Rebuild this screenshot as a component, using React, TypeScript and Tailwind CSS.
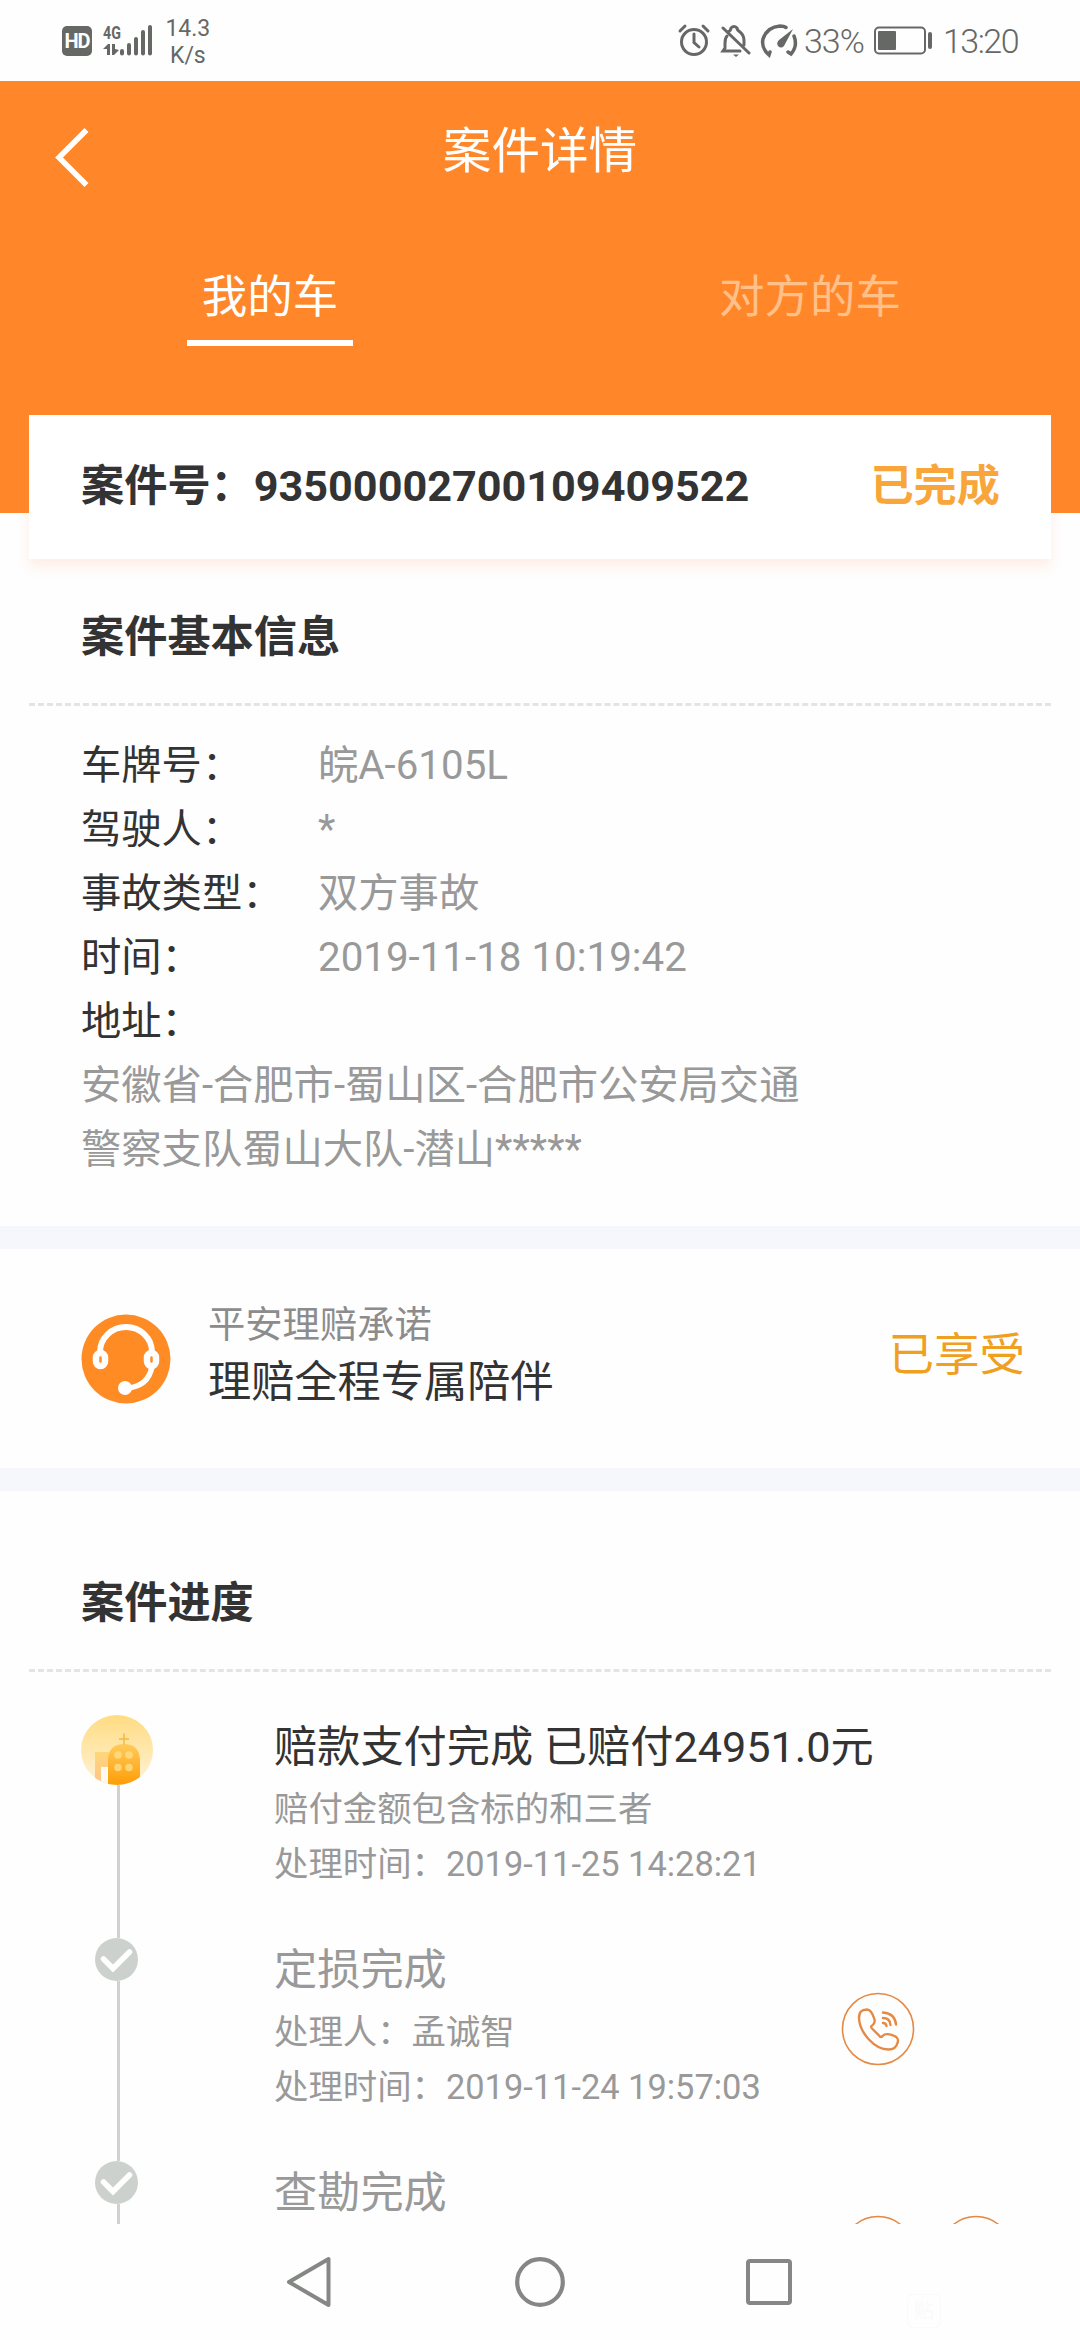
import type { ReactNode } from 'react'

const basicInfo = [
  { label: '车牌号：', value: '皖A-6105L' },
  { label: '驾驶人：', value: '*' },
  { label: '事故类型：', value: '双方事故' },
  { label: '时间：', value: '2019-11-18 10:19:42' },
  { label: '地址：', value: '' },
]

function StatusBar() {
  return (
    <div className="flex h-[81px] shrink-0 items-start justify-between pr-[61px] pl-[62px] text-[#666866]">
      <div className="flex">
        <div className="mt-[26px] flex h-[30px] w-[30px] items-center justify-center rounded-[5px] bg-[#666866] text-[20px] leading-none font-bold tracking-[-1px] text-white">
          HD
        </div>
        <div className="mt-[24px] ml-[11px]">
          <div className="h-[18px] origin-left scale-x-[0.75] text-[19px] leading-[17px] font-bold">4G</div>
        </div>
        <svg className="mt-[24px] -ml-[24px]" width="52" height="32" viewBox="0 0 52 32" fill="currentColor">
          <path d="M0 25l5-5h2v11H4v-6zM9 20h3v5l4 1-5 5H9z" />
          <rect x="17" y="25" width="4" height="6.500" rx="2" />
          <rect x="24" y="19" width="4" height="12.500" rx="2" />
          <rect x="31" y="13" width="4" height="18.500" rx="2" />
          <rect x="38" y="6" width="4" height="25.500" rx="2" />
          <rect x="45" y="1" width="4" height="30.500" rx="2" />
        </svg>
        <div className="mt-[15px] ml-[10px] w-[46px] text-center text-[23px] leading-[27px]">
          14.3
          <br />
          K/s
        </div>
      </div>
      <div className="mt-[22px] flex h-[38px] items-center">
        <svg className="mr-[6px]" width="122" height="36" viewBox="0 0 122 36" fill="none" stroke="currentColor" strokeWidth="3">
          <circle cx="18" cy="19" r="12.500" />
          <path d="M18 11v8.500l5 4.500M4 8l5-5M27 3l5 5" strokeLinecap="round" />
          <path d="M52 9q3-1.500 3-4q3-3 6 0q0 2 3 4q4 3 4 9v4M51 13q-2 2-2 7v5l-2 3h17M47 5l26 25" strokeLinecap="round" />
          <path d="M57 31.500h6l-3 2.500z" fill="currentColor" stroke="none" />
          <g transform="translate(5 0)">
            <path d="M89 29l-1 3q-8-7-6-16q4-12 17-13q4 0 6 1.500M113 13q4 10-3 18l-3-2" strokeWidth="3.500" strokeLinecap="round" />
            <path d="M112 6l-9 17q-3 3-6 0q-2-3 1-6z" fill="currentColor" stroke="none" />
          </g>
        </svg>
        <div className="w-[70px] text-[34px] leading-[38px] font-light tracking-[-1px]">33%</div>
        <svg width="60" height="30" viewBox="0 0 60 30" fill="none" stroke="currentColor">
          <rect x="1" y="1.500" width="50" height="26" rx="4" strokeWidth="2" />
          <rect x="4" y="5" width="18" height="19" rx="1" fill="currentColor" stroke="none" />
          <rect x="54" y="6" width="4" height="17" rx="2" fill="currentColor" stroke="none" />
        </svg>
        <div className="ml-[9px] w-[76px] text-[34px] leading-[38px] font-light tracking-[-1.5px]">13:20</div>
      </div>
    </div>
  )
}

function Header() {
  return (
    <header className="h-[432px] shrink-0 bg-[#ff872a] text-white">
      <div className="grid h-[140px] grid-cols-[140px_1fr_140px] items-center">
        <svg className="mt-[11px] ml-[54px]" width="36" height="60" viewBox="0 0 36 60" fill="none" stroke="currentColor" strokeWidth="5.500">
          <path d="M32.500 3L5 30.500L32.500 58" />
        </svg>
        <h1 className="pt-[2px] text-center text-[48.600px] leading-[60px]">案件详情</h1>
      </div>
      <div className="grid grid-cols-2 pt-[47px] text-[45.500px] leading-[60px]">
        <div className="mx-auto w-[166px] border-b-[6px] border-white pb-[12px] text-center">我的车</div>
        <div className="text-center text-[#ffc08a]">对方的车</div>
      </div>
    </header>
  )
}

function SectionTitle({ children }: { children: ReactNode }) {
  return (
    <h2 className="mx-[29px] border-b-[3px] border-dashed border-[#e4e4e4] pb-[35px] pl-[52px] text-[43.200px] leading-[60px] font-bold">
      {children}
    </h2>
  )
}

function HeadsetIcon() {
  return (
    <svg className="shrink-0" width="90" height="90" viewBox="0 0 90 90" fill="none" stroke="#fff">
      <circle cx="45" cy="45" r="44.500" fill="#ff8b25" stroke="none" />
      <path d="M19 38a26 25 0 0 1 52 0" strokeWidth="6" />
      <rect x="15" y="39" width="9" height="13" rx="4.500" strokeWidth="6.500" />
      <rect x="66" y="39" width="9" height="13" rx="4.500" strokeWidth="6.500" />
      <path d="M71 53q-4 19-24 21" strokeWidth="5.500" />
      <circle cx="44" cy="74" r="7" fill="#fff" stroke="none" />
    </svg>
  )
}

function HospitalIcon() {
  return (
    <svg className="shrink-0" width="72" height="70" viewBox="0 0 72 70">
      <defs>
        <linearGradient id="sky" x1="0" y1="0" x2="0" y2="1">
          <stop offset="0" stopColor="#ffdc82" />
          <stop offset="1" stopColor="#fff3d8" />
        </linearGradient>
        <linearGradient id="tower" x1="0" y1="0" x2="0" y2="1">
          <stop offset="0" stopColor="#ffcb5c" />
          <stop offset="1" stopColor="#ff9d05" />
        </linearGradient>
        <linearGradient id="annex" x1="0" y1="0" x2="0" y2="1">
          <stop offset="0" stopColor="#ffd67a" />
          <stop offset="1" stopColor="#ffc48a" />
        </linearGradient>
        <clipPath id="disc">
          <ellipse cx="36" cy="35" rx="36" ry="35" />
        </clipPath>
      </defs>
      <g clipPath="url(#disc)">
        <rect width="72" height="70" fill="url(#sky)" />
        <rect x="14" y="37" width="14" height="33" fill="url(#annex)" />
        <rect x="20" y="52" width="7" height="18" fill="#fffaf0" />
        <path d="M27 70V44q1-15 16-15t16 15v26z" fill="url(#tower)" />
        <path d="M43 18.500v11M38 24h10" stroke="#f5b83d" strokeWidth="1.500" />
        <g fill="#ffe08c" fillOpacity=".75">
          <circle cx="37" cy="40" r="3.800" />
          <circle cx="48" cy="40" r="3.800" />
          <circle cx="37" cy="52.500" r="3.800" />
          <circle cx="48" cy="52.500" r="3.800" />
        </g>
      </g>
    </svg>
  )
}

function CheckIcon() {
  return (
    <svg className="mr-[1px] shrink-0" width="43" height="43" viewBox="0 0 43 43">
      <circle cx="21.500" cy="21.500" r="21.500" fill="#cdd1ce" />
      <path d="M8.500 21L18 30.500L34.500 14" fill="none" stroke="#fff" strokeWidth="5.500" strokeLinecap="round" />
    </svg>
  )
}

function PhoneIcon() {
  return (
    <svg className="shrink-0" width="74" height="74" viewBox="0 0 74 74" fill="none" stroke="#e58a45">
      <circle cx="37" cy="37" r="35.500" strokeWidth="1.600" />
      <path
        d="M18 26c0-7 3-8 8-8.500c4 0 6 5 7.500 10c1 4-1 5-3 6.500c-1 1 0 2 1 3l7 7c1 1.500 2 1.500 3 0c2-2.500 7-2.500 12 0c4 2 4 4 3 7c-1 4-4 6.500-9 6.500c-14 0-29-17-29.500-31.500z"
        strokeWidth="2.400"
      />
      <path d="M42 31q3 0 3.500 3M42 26q7 0 7.500 7M42 20.500q12 1 13 12" strokeWidth="2.400" strokeLinecap="round" />
    </svg>
  )
}

interface TimelineItemProps {
  icon: ReactNode
  title: string
  lines?: string[]
  active?: boolean
  children?: ReactNode
}

function TimelineItem({ icon, title, lines = [], active, children }: TimelineItemProps) {
  return (
    <li className="flex h-[223px] text-[#999]">
      <div className="flex w-[72px] shrink-0 flex-col items-center">
        {icon}
        <div className="ml-[3px] w-[3px] flex-1 bg-[#cfd2d0]" />
      </div>
      <div className="ml-[121px] w-[567px] pt-[2px] whitespace-nowrap">
        <h3 className={active ? 'text-[43.200px] leading-[62px] text-[#333]' : 'text-[43.200px] leading-[62px]'}>
          {title}
        </h3>
        {lines.map((line) => (
          <p key={line} className="text-[34.400px] leading-[55px] first-of-type:mt-[3px]">
            {line}
          </p>
        ))}
      </div>
      {children}
    </li>
  )
}

function NavBar() {
  return (
    <nav className="flex h-[116px] shrink-0 items-center justify-between pr-[288px] pl-[286px]">
      <svg width="46" height="54" viewBox="0 0 46 54" fill="none" stroke="#858785" strokeWidth="4" strokeLinejoin="round">
        <path d="M3 27L42.500 4V50z" />
      </svg>
      <svg className="ml-[2px]" width="52" height="52" viewBox="0 0 52 52" fill="none" stroke="#858785" strokeWidth="4.200">
        <circle cx="26" cy="26" r="22.800" />
      </svg>
      <div className="h-[46px] w-[46px] rounded-[4px] border-[4px] border-[#858785]" />
    </nav>
  )
}

export default function App() {
  return (
    <div className="relative flex h-[2340px] w-[1080px] flex-col overflow-hidden bg-[#fefefe] font-[Roboto,'Noto_Sans_CJK_SC',sans-serif] text-[#333]">
      <StatusBar />
      <Header />
      <main className="-mt-[98px] flex h-[1809px] shrink-0 flex-col overflow-hidden">
        <div className="mx-[29px] flex h-[144px] shrink-0 items-center justify-between bg-white pr-[51px] pl-[52px] text-[43.200px] font-bold shadow-[0_8px_12px_rgba(255,120,60,0.12)]">
          <span>案件号：93500002700109409522</span>
          <span className="text-[#f8a63a]">已完成</span>
        </div>

        <section className="h-[667px] shrink-0 pt-[49px]">
          <SectionTitle>案件基本信息</SectionTitle>
          <dl className="px-[81px] pt-[28px] text-[40.300px] leading-[64px]">
            {basicInfo.map(({ label, value }) => (
              <div key={label} className="flex h-[64px]">
                <dt className="w-[237px]">{label}</dt>
                <dd className="text-[#999]">{value}</dd>
              </div>
            ))}
          </dl>
          <p className="px-[81px] text-[40.300px] leading-[64px] text-[#999]">
            安徽省-合肥市-蜀山区-合肥市公安局交通
            <br />
            警察支队蜀山大队-潜山*****
          </p>
        </section>

        <section className="flex h-[265px] shrink-0 items-center border-y-[23px] border-[#f6f7fd] pr-[55px] pl-[81px]">
          <HeadsetIcon />
          <div className="ml-[37px] flex-1 pb-[10px]">
            <p className="text-[37.300px] leading-[58px] text-[#8c8c8c]">平安理赔承诺</p>
            <p className="text-[43.200px] leading-[58px]">理赔全程专属陪伴</p>
          </div>
          <span className="pb-[4px] text-[45.500px] text-[#f0a020]">已享受</span>
        </section>

        <section className="shrink-0 pt-[83px]">
          <SectionTitle>案件进度</SectionTitle>
          <ul className="pt-[43px] pl-[81px]">
            <TimelineItem
              active
              icon={<HospitalIcon />}
              title="赔款支付完成 已赔付24951.0元"
              lines={['赔付金额包含标的和三者', '处理时间：2019-11-25 14:28:21']}
            />
            <TimelineItem
              icon={<CheckIcon />}
              title="定损完成"
              lines={['处理人：孟诚智', '处理时间：2019-11-24 19:57:03']}
            >
              <div className="mt-[54px]">
                <PhoneIcon />
              </div>
            </TimelineItem>
            <TimelineItem icon={<CheckIcon />} title="查勘完成">
              <div className="mt-[54px] flex gap-[24px]">
                <PhoneIcon />
                <PhoneIcon />
              </div>
            </TimelineItem>
          </ul>
        </section>
      </main>
      <NavBar />
      <div className="absolute top-[2294px] left-[907px] flex h-[34px] w-[34px] items-center justify-center rounded-[6px] border border-[#fafafa] text-[20px] leading-none text-[#fafafa]">
        贴
      </div>
    </div>
  )
}
